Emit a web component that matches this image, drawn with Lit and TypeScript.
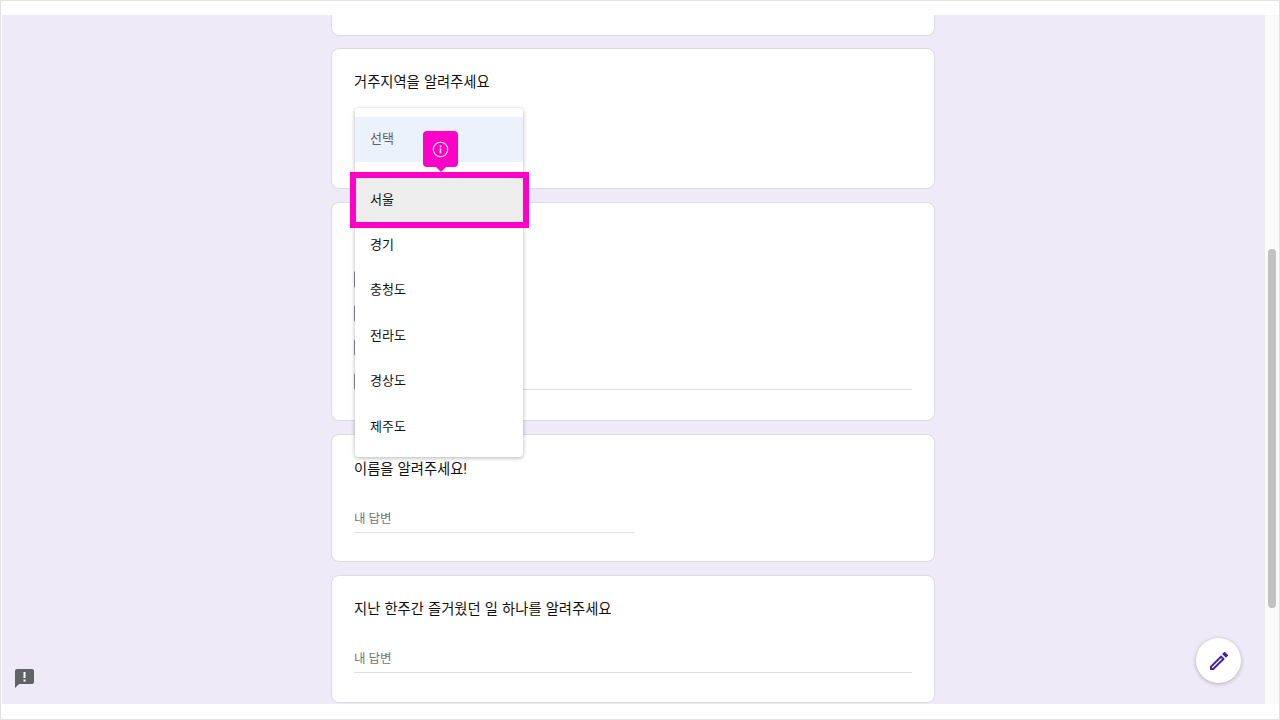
import { LitElement, html, css } from 'lit';
import { customElement } from 'lit/decorators.js';

const REGIONS = ['서울', '경기', '충청도', '전라도', '경상도', '제주도'];

@customElement('app-root')
export class AppRoot extends LitElement {
    static override styles = css`
        :host {
            display: block;
            width: 1280px;
            height: 720px;
            box-sizing: border-box;
            position: relative;
            overflow: hidden;
            background: #fff;
            border: 1px solid #e2e2e2;
            font-family: Roboto, "Noto Sans CJK KR", sans-serif;
            color: #111;
        }
        .frame {
            display: flex;
            height: 718px;
            padding: 14px 0;
            box-sizing: border-box;
        }
        .page {
            flex: 1;
            background: #eeeaf8;
            margin-left: 1px;
            height: 689px;
            overflow: hidden;
        }
        .column {
            width: 604px;
            margin-left: 329px;
            display: flex;
            flex-direction: column;
            gap: 13px;
        }
        .card {
            background: #fff;
            border: 1px solid #dadce0;
            border-radius: 8px;
            box-sizing: border-box;
            padding: 23px 22px;
            flex: none;
        }
        .card.top {
            height: 21px;
            border-top: 0;
            border-radius: 0 0 8px 8px;
            padding: 0;
            margin-bottom: -1px;
        }
        .card.region { height: 141px; }
        .card.check { height: 219px; padding-top: 68px; }
        .card.name { height: 128px; padding-top: 24px; }
        .card.last { height: 128px; }
        .title {
            font-size: 14.3px;
            line-height: 20px;
            word-spacing: 0.6px;
        }
        .answer {
            margin-top: 30px;
            width: 280px;
            height: 23px;
            font-size: 12.5px;
            line-height: 20px;
            color: #70757a;
            border-bottom: 1px solid #e0e0e0;
        }
        .answer.wide { width: auto; }
        .checks {
            display: flex;
            flex-direction: column;
            gap: 17px;
        }
        .check-row {
            display: flex;
            height: 17px;
        }
        .box {
            width: 17px;
            height: 17px;
            box-sizing: border-box;
            border: 2px solid #80858a;
            border-radius: 2px;
            flex: none;
        }
        .check-row.other::after {
            content: '';
            flex: 1;
            border-bottom: 1px solid #dadce0;
        }
        .scrollbar {
            width: 15px;
            flex: none;
            background: #fafafa;
            border-left: 1px solid #ececec;
            box-sizing: border-box;
            height: 689px;
            position: relative;
        }
        .thumb {
            position: absolute;
            left: 3px;
            top: 234px;
            width: 8px;
            height: 359px;
            border-radius: 4px;
            background: #c1c1c1;
        }
        .menu {
            position: absolute;
            left: 354px;
            top: 107px;
            width: 168px;
            height: 349px;
            background: #fff;
            border-radius: 4px;
            box-shadow: 0 1px 4px rgba(60, 64, 67, 0.4);
            padding: 9px 0 0;
            box-sizing: border-box;
        }
        .option {
            height: 45.4px;
            box-sizing: border-box;
            display: flex;
            align-items: center;
            padding: 0 0 2px 15px;
            font-size: 13px;
        }
        .option.placeholder {
            background: #ebf2fc;
            color: #5f6368;
            padding-bottom: 4px;
            margin-bottom: 14px;
        }
        .option.hover { background: #eeeeee; }
        .highlight {
            position: absolute;
            left: 349px;
            top: 171px;
            width: 179px;
            height: 56px;
            box-sizing: border-box;
            border: 6px solid #ff00c8;
        }
        .tip {
            position: absolute;
            left: 422px;
            top: 130px;
            width: 35px;
            height: 36px;
            border-radius: 4px;
            background: #ff00c8;
            display: flex;
            align-items: center;
            justify-content: center;
        }
        .tip::after {
            content: '';
            position: absolute;
            left: 12px;
            bottom: -5px;
            border-left: 6px solid transparent;
            border-right: 6px solid transparent;
            border-top: 6px solid #ff00c8;
        }
        .fab {
            position: absolute;
            left: 1195px;
            top: 637px;
            width: 45px;
            height: 45px;
            border-radius: 50%;
            background: #fff;
            box-shadow: 0 1px 4px rgba(60, 64, 67, 0.35);
            display: flex;
            align-items: center;
            justify-content: center;
        }
        .report {
            position: absolute;
            left: 14px;
            top: 668px;
            display: block;
        }
    `;

    override render() {
        return html`
            <div class="frame">
                <div class="page">
                    <div class="column">
                        <div class="card top"></div>
                        <div class="card region">
                            <div class="title">거주지역을 알려주세요</div>
                        </div>
                        <div class="card check">
                            <div class="checks">
                                <div class="check-row"><div class="box"></div></div>
                                <div class="check-row"><div class="box"></div></div>
                                <div class="check-row"><div class="box"></div></div>
                                <div class="check-row other"><div class="box"></div></div>
                            </div>
                        </div>
                        <div class="card name">
                            <div class="title">이름을 알려주세요!</div>
                            <div class="answer">내 답변</div>
                        </div>
                        <div class="card last">
                            <div class="title">지난 한주간 즐거웠던 일 하나를 알려주세요</div>
                            <div class="answer wide">내 답변</div>
                        </div>
                    </div>
                </div>
                <div class="scrollbar"><div class="thumb"></div></div>
            </div>

            <div class="menu">
                <div class="option placeholder">선택</div>
                ${REGIONS.map((r, i) => html`<div class="option ${i === 0 ? 'hover' : ''}">${r}</div>`)}
            </div>
            <div class="highlight"></div>
            <div class="tip">
                <svg width="17" height="17" viewBox="0 0 17 17" fill="none" stroke="#fff">
                    <circle cx="8.5" cy="8.5" r="7.2" stroke-width="1.1"></circle>
                    <path d="M8.5 7.6v4.6M8.5 4.6v1.6" stroke-width="1.5"></path>
                </svg>
            </div>

            <div class="fab">
                <svg width="24" height="24" viewBox="0 0 24 24" fill="#4a1ea0">
                    <path d="M3 17.25V21h3.75L17.81 9.94l-3.75-3.75L3 17.25zM5.92 19H5v-.92l9.06-9.06.92.92L5.92 19zM20.71 7.04a1 1 0 0 0 0-1.41l-2.34-2.34a1 1 0 0 0-1.41 0l-1.83 1.83 3.75 3.75 1.83-1.83z"></path>
                </svg>
            </div>
            <svg class="report" width="20" height="20" viewBox="0 0 20 20" fill="#5f6368">
                <path d="M2 0h15a2 2 0 0 1 2 2v11a2 2 0 0 1-2 2H4l-4 4V2a2 2 0 0 1 2-2z"></path>
                <path d="M8.5 3h2v6h-2zM8.5 10.5h2v2h-2z" fill="#fff"></path>
            </svg>
        `;
    }
}
